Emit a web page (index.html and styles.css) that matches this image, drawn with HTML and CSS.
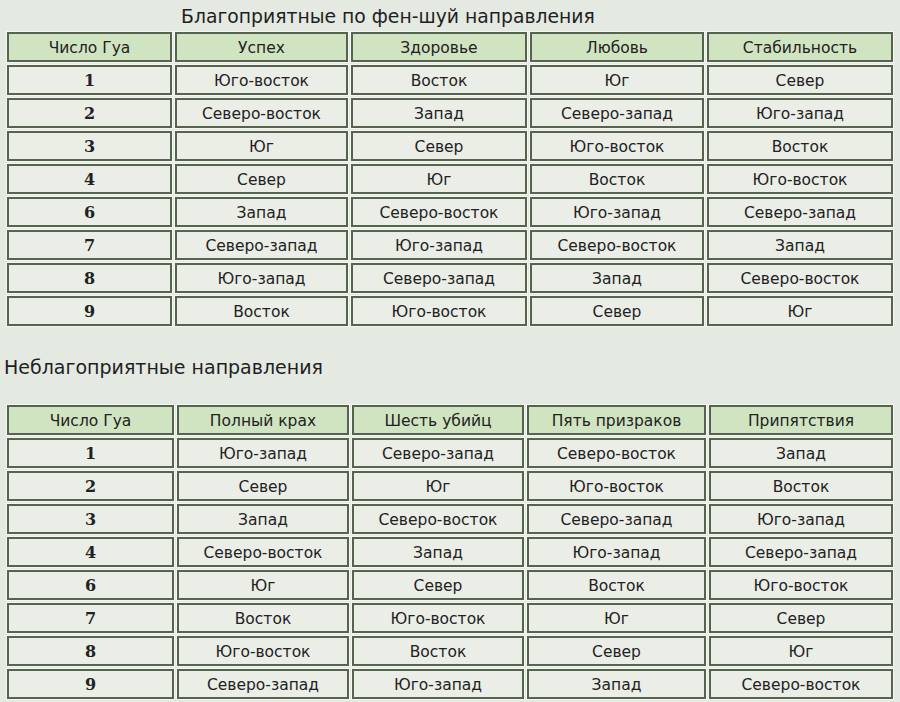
FILE: index.html
```html
<!DOCTYPE html>
<html lang="ru">
<head>
<meta charset="utf-8">
<link rel="stylesheet" href="styles.css">
</head>
<body>
<h2 class="title title-good">Благоприятные по фен-шуй направления</h2>
<div class="grid grid-good">
  <div class="cell head">Число Гуа</div><div class="cell head">Успех</div><div class="cell head">Здоровье</div><div class="cell head">Любовь</div><div class="cell head">Стабильность</div>
  <div class="cell num">1</div><div class="cell">Юго-восток</div><div class="cell">Восток</div><div class="cell">Юг</div><div class="cell">Север</div>
  <div class="cell num">2</div><div class="cell">Северо-восток</div><div class="cell">Запад</div><div class="cell">Северо-запад</div><div class="cell">Юго-запад</div>
  <div class="cell num">3</div><div class="cell">Юг</div><div class="cell">Север</div><div class="cell">Юго-восток</div><div class="cell">Восток</div>
  <div class="cell num">4</div><div class="cell">Север</div><div class="cell">Юг</div><div class="cell">Восток</div><div class="cell">Юго-восток</div>
  <div class="cell num">6</div><div class="cell">Запад</div><div class="cell">Северо-восток</div><div class="cell">Юго-запад</div><div class="cell">Северо-запад</div>
  <div class="cell num">7</div><div class="cell">Северо-запад</div><div class="cell">Юго-запад</div><div class="cell">Северо-восток</div><div class="cell">Запад</div>
  <div class="cell num">8</div><div class="cell">Юго-запад</div><div class="cell">Северо-запад</div><div class="cell">Запад</div><div class="cell">Северо-восток</div>
  <div class="cell num">9</div><div class="cell">Восток</div><div class="cell">Юго-восток</div><div class="cell">Север</div><div class="cell">Юг</div>
</div>
<h2 class="title title-bad">Неблагоприятные направления</h2>
<div class="grid grid-bad">
  <div class="cell head">Число Гуа</div><div class="cell head">Полный крах</div><div class="cell head">Шесть убийц</div><div class="cell head">Пять призраков</div><div class="cell head">Припятствия</div>
  <div class="cell num">1</div><div class="cell">Юго-запад</div><div class="cell">Северо-запад</div><div class="cell">Северо-восток</div><div class="cell">Запад</div>
  <div class="cell num">2</div><div class="cell">Север</div><div class="cell">Юг</div><div class="cell">Юго-восток</div><div class="cell">Восток</div>
  <div class="cell num">3</div><div class="cell">Запад</div><div class="cell">Северо-восток</div><div class="cell">Северо-запад</div><div class="cell">Юго-запад</div>
  <div class="cell num">4</div><div class="cell">Северо-восток</div><div class="cell">Запад</div><div class="cell">Юго-запад</div><div class="cell">Северо-запад</div>
  <div class="cell num">6</div><div class="cell">Юг</div><div class="cell">Север</div><div class="cell">Восток</div><div class="cell">Юго-восток</div>
  <div class="cell num">7</div><div class="cell">Восток</div><div class="cell">Юго-восток</div><div class="cell">Юг</div><div class="cell">Север</div>
  <div class="cell num">8</div><div class="cell">Юго-восток</div><div class="cell">Восток</div><div class="cell">Север</div><div class="cell">Юг</div>
  <div class="cell num">9</div><div class="cell">Северо-запад</div><div class="cell">Юго-запад</div><div class="cell">Запад</div><div class="cell">Северо-восток</div>
</div>
</body>
</html>
```
FILE: styles.css
```css
html, body {
  margin: 0;
  padding: 0;
}
body {
  width: 900px;
  height: 702px;
  overflow: hidden;
  background: #e4e9e2;
  font-family: "DejaVu Sans", Verdana, sans-serif;
  color: #222;
}
.title {
  margin: 0;
  font-weight: normal;
  font-size: 19px;
  line-height: 24px;
  color: #1f1f1f;
}
.title-good {
  font-size: 18.8px;
  padding: 5px 0 0 181px;
  height: 24px;
  margin-bottom: 3px;
}
.title-bad {
  padding-left: 4px;
  margin-top: 29px;
  margin-bottom: 26px;
}
.grid {
  display: grid;
  gap: 3px;
  margin-left: 7px;
  width: 886px;
  grid-auto-rows: 30px;
}
.grid-good {
  grid-template-columns: 165px 173px 176px 174px 186px;
}
.grid-bad {
  grid-template-columns: 167px 172px 172px 179px 184px;
}
.cell {
  box-sizing: border-box;
  border: 2px solid #55634f;
  background: #eaeee7;
  display: flex;
  align-items: center;
  justify-content: center;
  padding-top: 1px;
  font-size: 15.5px;
  box-shadow: 0 0 0 1px #f4f6f2;
}
.head {
  background: #d1e4c1;
}
.num {
  font-family: "DejaVu Serif", Georgia, serif;
  font-weight: bold;
  font-size: 16px;
}
```
